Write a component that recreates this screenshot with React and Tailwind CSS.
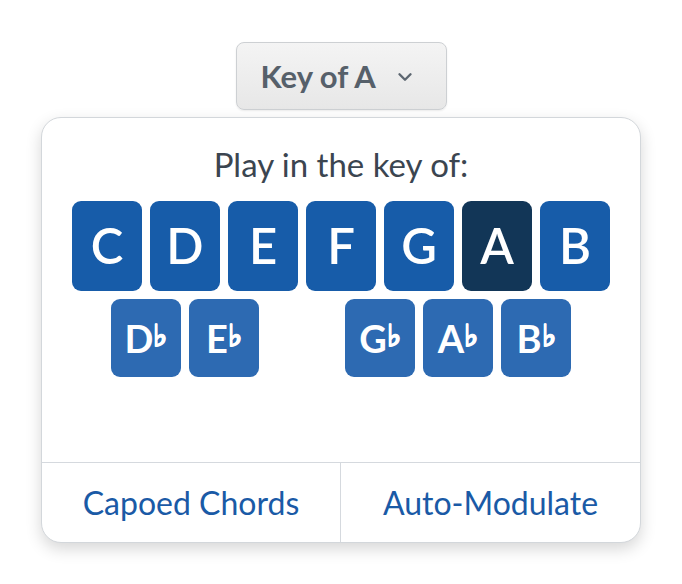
import { ChevronDown } from 'lucide-react'

const naturals = ['C', 'D', 'E', 'F', 'G', 'A', 'B']
// null leaves a gap where E# would sit
const flats = ['D', 'E', null, 'G', 'A', 'B']

const font = { fontFamily: 'Lato, "Open Sans", sans-serif' }

function NaturalKey({ name, active }) {
  return (
    <button
      className={`w-[70px] h-[90px] rounded-[9px] flex items-center justify-center text-white text-[49px] font-semibold ${
        active ? 'bg-[#123657]' : 'bg-[#175ca9]'
      }`}
    >
      {name}
    </button>
  )
}

function FlatKey({ name }) {
  if (!name) return <div className="w-[70px] h-[78px]" />
  return (
    <button className="w-[70px] h-[78px] rounded-[9px] bg-[#2d6ab2] flex items-center justify-center text-white">
      <span className="text-[38px] font-bold leading-none">{name}</span>
      <span className="text-[30px] font-bold leading-none -mt-[9px] [-webkit-text-stroke:0.8px_white]">♭</span>
    </button>
  )
}

export default function App() {
  const current = 'A'

  return (
    <div className="w-[682px] h-[584px] bg-white flex flex-col items-center pt-[42px]" style={font}>
      {/* key picker toggle */}
      <button className="w-[211px] h-[68px] rounded-[8px] border border-[#cdd0d3] bg-gradient-to-b from-[#f4f4f4] to-[#e7e7e7] flex items-center gap-[18px] pl-[24px] text-[#56606a] shadow-[0_1px_2px_rgba(0,0,0,0.08)]">
        <span className="text-[31px] font-bold">Key of A</span>
        <ChevronDown size={22} strokeWidth={2.6} className="mt-[2px] text-[#5c6670]" />
      </button>

      {/* dropdown panel */}
      <div className="mt-[7px] w-[600px] h-[426px] rounded-[20px] border border-[#d3d7db] bg-white shadow-[0_6px_16px_rgba(0,0,0,0.16)] flex flex-col overflow-hidden">
        <div className="flex-1 flex flex-col items-center pt-[27px]">
          <p className="text-[33px] leading-[38px] text-[#3b4550]">Play in the key of:</p>
          <div className="mt-[18px] flex gap-[8px]">
            {naturals.map((n) => (
              <NaturalKey key={n} name={n} active={n === current} />
            ))}
          </div>
          <div className="mt-[8px] flex gap-[8px]">
            {flats.map((n, i) => (
              <FlatKey key={i} name={n} />
            ))}
          </div>
        </div>
        <div className="h-[80px] border-t border-[#d5d9de] grid grid-cols-2 text-[#1a5aa6] text-[32px]">
          <button className="flex items-center justify-center border-r border-[#d5d9de]">Capoed Chords</button>
          <button className="flex items-center justify-center">Auto-Modulate</button>
        </div>
      </div>
    </div>
  )
}
